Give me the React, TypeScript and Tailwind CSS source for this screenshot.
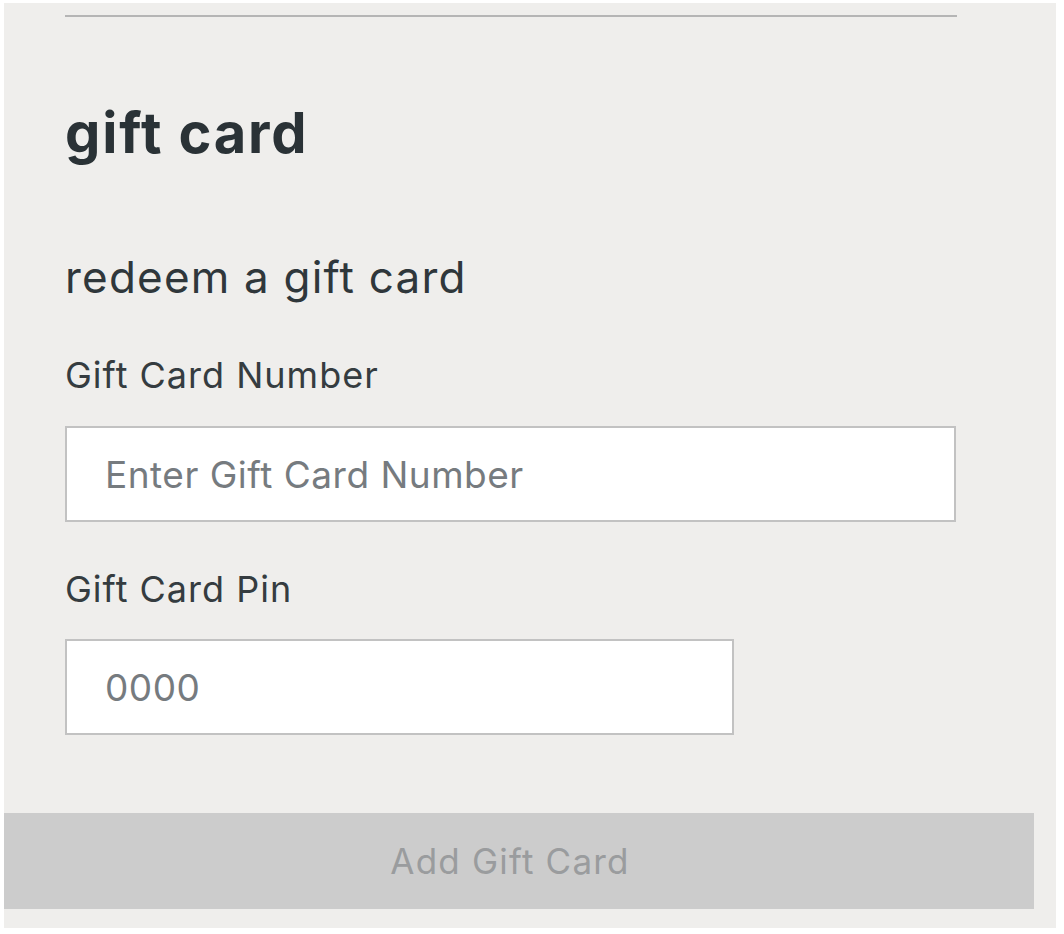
import React, { useState } from 'react';

export default function App() {
  const [cardNumber, setCardNumber] = useState('');
  const [pin, setPin] = useState('');

  return (
    <div className="min-h-[934px] bg-white pl-[4px] pt-[3px]" style={{ fontFamily: 'Inter, "Noto Sans", sans-serif' }}>
      <div className="w-[1052px] h-[925px] bg-[#efeeec] flex flex-col">
        {/* divider */}
        <div className="ml-[61px] mt-[12px] w-[892px] h-[2px] bg-[#b5b5b5]" />

        <h1 className="ml-[61px] mt-[88px] text-[56px] leading-[56px] font-bold text-[#2a3236] tracking-[1.8px]">
          gift card
        </h1>

        <h2 className="ml-[61px] mt-[94px] text-[44px] leading-[44px] font-normal text-[#2f373b] tracking-[1.2px]">
          redeem a gift card
        </h2>

        <label className="ml-[61px] mt-[58px] text-[36px] leading-[36px] text-[#353c40] tracking-[1px]">
          Gift Card Number
        </label>
        <input
          value={cardNumber}
          onChange={(e) => setCardNumber(e.target.value)}
          placeholder="Enter Gift Card Number"
          className="ml-[61px] mt-[33px] w-[891px] h-[96px] bg-white border-2 border-[#c2c2c2] px-[38px] text-[37px] tracking-[0.5px] text-[#353c40] placeholder:text-[#767b7f] outline-none"
        />

        <label className="ml-[61px] mt-[49px] text-[36px] leading-[36px] text-[#353c40] tracking-[1px]">
          Gift Card Pin
        </label>
        <input
          value={pin}
          onChange={(e) => setPin(e.target.value)}
          placeholder="0000"
          className="ml-[61px] mt-[32px] w-[669px] h-[96px] bg-white border-2 border-[#c2c2c2] px-[38px] text-[37px] tracking-[0.5px] text-[#353c40] placeholder:text-[#767b7f] outline-none"
        />

        <button
          type="button"
          disabled
          className="mt-[78px] w-[1030px] h-[96px] bg-[#cccccc] text-[35px] tracking-[1.2px] text-[#9a9c9e] flex items-center justify-center pr-[18px]"
        >
          Add Gift Card
        </button>
      </div>
    </div>
  );
}
